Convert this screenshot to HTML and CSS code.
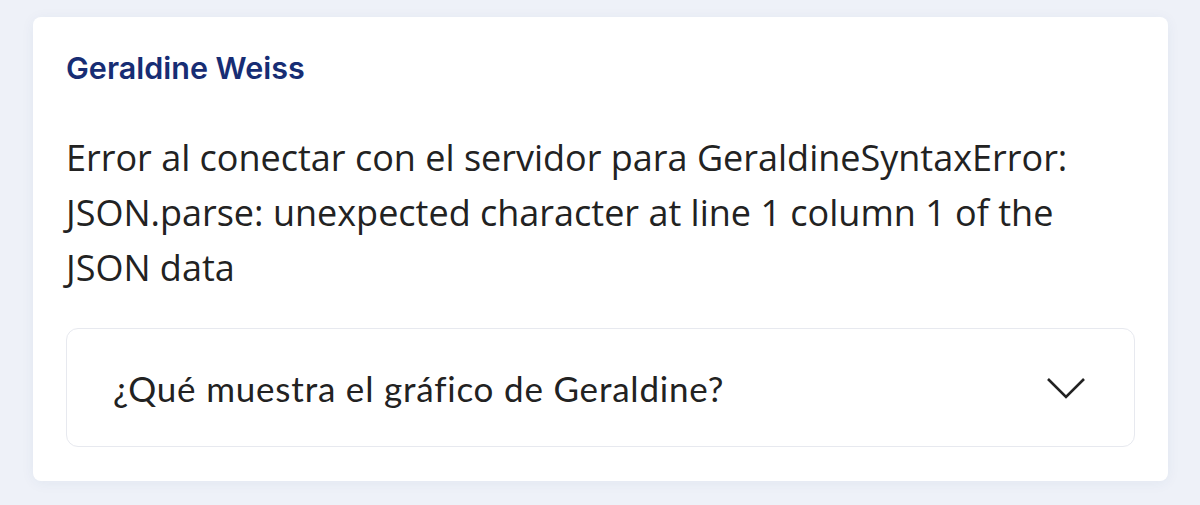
FILE: index.html
```html
<!DOCTYPE html>
<html lang="es">
<head>
<meta charset="utf-8">
<title>Geraldine Weiss</title>
<link rel="stylesheet" href="styles.css">
</head>
<body>
<div class="card">
  <h2 class="card-title">Geraldine Weiss</h2>
  <p class="card-error">Error al conectar con el servidor para GeraldineSyntaxError: JSON.parse: unexpected character at line 1 column 1 of the JSON data</p>
  <div class="faq">
    <button class="faq-head" type="button">
      <span class="faq-question">¿Qué muestra el gráfico de Geraldine?</span>
      <svg class="faq-chevron" width="38" height="22" viewBox="0 0 38 22" aria-hidden="true">
        <polyline points="1,2 19,20 37,2" fill="none" stroke="#222" stroke-width="2.6"/>
      </svg>
    </button>
  </div>
</div>
</body>
</html>
```

FILE: styles.css
```css
html, body {
	margin: 0;
	background: #eef1f8;
}
body {
	padding: 17px 32px 24px 33px;
}
.card {
	background: #fff;
	border-radius: 8px;
	box-shadow: 0 2px 14px rgba(40, 60, 120, 0.06);
	padding: 33px 33px 34px 33px;
}
.card-title {
	margin: 0;
	font-family: Inter, sans-serif;
	font-weight: 600;
	font-size: 30.5px;
	line-height: 36px;
	color: #172d74;
}
.card-error {
	margin: 44px 0 33px 0;
	font-family: "Open Sans", sans-serif;
	font-size: 36px;
	line-height: 55px;
	color: #222;
}
/* accordion row */
.faq {
	border: 1px solid #e7e9ef;
	border-radius: 12px;
}
.faq-head {
	display: flex;
	align-items: center;
	justify-content: space-between;
	width: 100%;
	height: 117px;
	padding: 0 49px 0 46px;
	border: 0;
	background: none;
	font-family: Lato, sans-serif;
	font-size: 35px;
	letter-spacing: 0.8px;
	color: #222;
	text-align: left;
}
.faq-chevron {
	flex: none;
}
```
